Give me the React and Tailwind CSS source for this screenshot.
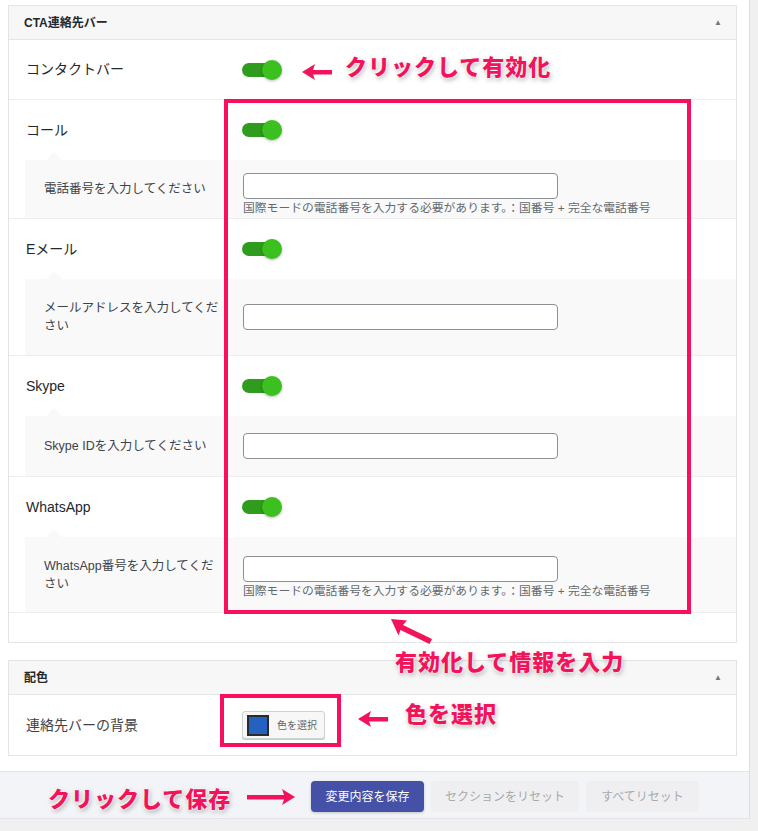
import React from "react";

const FONT = "font-['Liberation_Sans','Noto_Sans_CJK_JP',sans-serif]";
const NOTE =
  "absolute font-['Noto_Sans_CJK_JP',sans-serif] font-black text-[22px] leading-none tracking-[1px] text-[#f2145b] [text-shadow:0_0_1px_#fff,0_0_2px_#fff,0_0_3px_#fff,1px_2px_5px_rgba(0,0,0,0.35)]";

const Toggle = () => (
  <div className="relative w-[40px] h-[20px]">
    <div className="absolute left-0 top-[3px] w-[34px] h-[14px] rounded-full bg-[#2f9c1e]" />
    <div className="absolute right-0 top-0 w-[20px] h-[20px] rounded-full bg-[#3cc01f] shadow-[0_1px_3px_rgba(0,0,0,0.3)]" />
  </div>
);

const PanelHeader = ({ title }) => (
  <div className="flex items-center justify-between h-[34px] bg-[#f7f7f7] border-b border-[#e4e5e7] pl-[15px] pr-[14px]">
    <span className="text-[12px] font-semibold text-[#23282d]">{title}</span>
    <span className="text-[8px] text-[#777]">▲</span>
  </div>
);

const MainRow = ({ label, border }) => (
  <div className={`flex items-center h-[60px] ${border ? "border-b border-[#eeeeef]" : ""}`}>
    <div className="w-[233px] pl-[17px] text-[14px] text-[#23282d]">{label}</div>
    <Toggle />
  </div>
);

const SubRow = ({ label, help, height, field = "self-center" }) => (
  <div className={`relative ml-[16px] flex bg-[#f9f9f9] ${height}`}>
    <div className="absolute -top-[8px] left-[21px] w-0 h-0 border-x-[8px] border-x-transparent border-b-[8px] border-b-[#f9f9f9]" />
    <div className="self-center w-[218px] pl-[19px] pr-[20px] text-[12.5px] leading-[18px] text-[#3c434a]">{label}</div>
    <div className={`flex flex-col ${field}`}>
      <input className="w-[315px] h-[26px] rounded-[4px] border border-[#8c8f94] bg-white" />
      {help && (
        <p className="mt-[1px] text-[11.8px] leading-[16px] text-[#646970]">
          国際モードの電話番号を入力する必要があります。：国番号 + 完全な電話番号
        </p>
      )}
    </div>
  </div>
);

const Group = ({ label, sub, help, height, field }) => (
  <div className="border-b border-[#eeeeef]">
    <MainRow label={label} />
    <SubRow label={sub} help={help} height={height} field={field} />
  </div>
);

const LeftArrow = ({ className }) => (
  <svg className={className} width="30" height="16" viewBox="0 0 30 16">
    <path d="M0 8 L13 0 L11 6 H30 V10.5 H11 L13 16 Z" fill="#f2145b" />
  </svg>
);

export default function App() {
  return (
    <div className={`relative min-h-[831px] bg-[#f0f0f1] ${FONT}`}>
      <div className="w-[750px] bg-white border-r border-[#dcdcde]">
        <div className="pt-[5px] pb-[15px]">
          <div className="ml-[8px] w-[729px] border border-[#e2e4e7] bg-white">
            <PanelHeader title="CTA連絡先バー" />
            <MainRow label="コンタクトバー" border />
            <Group label="コール" sub="電話番号を入力してください" help height="h-[58px]" field="self-start mt-[13px]" />
            <Group label="Eメール" sub="メールアドレスを入力してください" height="h-[76px]" />
            <Group label="Skype" sub="Skype IDを入力してください" height="h-[60px]" />
            <Group label="WhatsApp" sub="WhatsApp番号を入力してください" help height="h-[75px]" field="self-start mt-[19px]" />
            <div className="h-[29px]" />
          </div>

          <div className="ml-[8px] mt-[17px] w-[729px] border border-[#e2e4e7] bg-white">
            <PanelHeader title="配色" />
            <div className="flex items-center h-[60px]">
              <div className="w-[233px] pl-[17px] text-[14px] text-[#3c434a]">連絡先バーの背景</div>
              <button className="flex items-center w-[83px] h-[28px] px-[4px] rounded-[3px] border border-[#cfd0d2] bg-[#f7f7f7] shadow-[0_1px_0_#ccc]">
                <span className="w-[22px] h-[21px] bg-[#2461c0] border-2 border-[#2b2b2b]" />
                <span className="ml-[8px] text-[10px] text-[#666]">色を選択</span>
              </button>
            </div>
          </div>
        </div>

        <div className="flex justify-end gap-[7px] h-[48px] pt-[9px] pr-[50px] bg-[#f3f4f7] border-y border-[#e2e4e7]">
          <button className="w-[113px] h-[31px] rounded-[4px] bg-[#4551a6] text-[12px] text-white shadow-[0_1px_3px_rgba(0,0,0,0.2)]">
            変更内容を保存
          </button>
          <button className="w-[148px] h-[31px] rounded-[4px] bg-[#efeff1] text-[12px] text-[#a7aaad]">
            セクションをリセット
          </button>
          <button className="w-[113px] h-[31px] rounded-[4px] bg-[#efeff1] text-[12px] text-[#a7aaad]">
            すべてリセット
          </button>
        </div>
      </div>

      {/* annotations */}
      <div className="absolute left-[224px] top-[99px] w-[467px] h-[515px] border-4 border-[#f8105c]" />
      <div className="absolute left-[220px] top-[694px] w-[121px] h-[53px] border-4 border-[#f8105c]" />

      <LeftArrow className="absolute left-[302px] top-[64px]" />
      <span className={`${NOTE} left-[345px] top-[54px]`}>クリックして有効化</span>

      <svg className="absolute left-[388px] top-[615px]" width="48" height="32" viewBox="0 0 48 32">
        <path d="M3 4 L19 5.5 L15 10 L44 24 L41.5 29 L12.5 15 L10.5 20.5 Z" fill="#f2145b" />
      </svg>
      <span className={`${NOTE} left-[395px] top-[649px]`}>有効化して情報を入力</span>

      <LeftArrow className="absolute left-[358px] top-[711px]" />
      <span className={`${NOTE} left-[405px] top-[701px]`}>色を選択</span>

      <span className={`${NOTE} left-[48px] top-[786px]`}>クリックして保存</span>
      <svg className="absolute left-[247px] top-[789px]" width="48" height="16" viewBox="0 0 48 16">
        <path d="M48 8 L35 0 L37 6 H0 V10.5 H37 L35 16 Z" fill="#f2145b" />
      </svg>
    </div>
  );
}
